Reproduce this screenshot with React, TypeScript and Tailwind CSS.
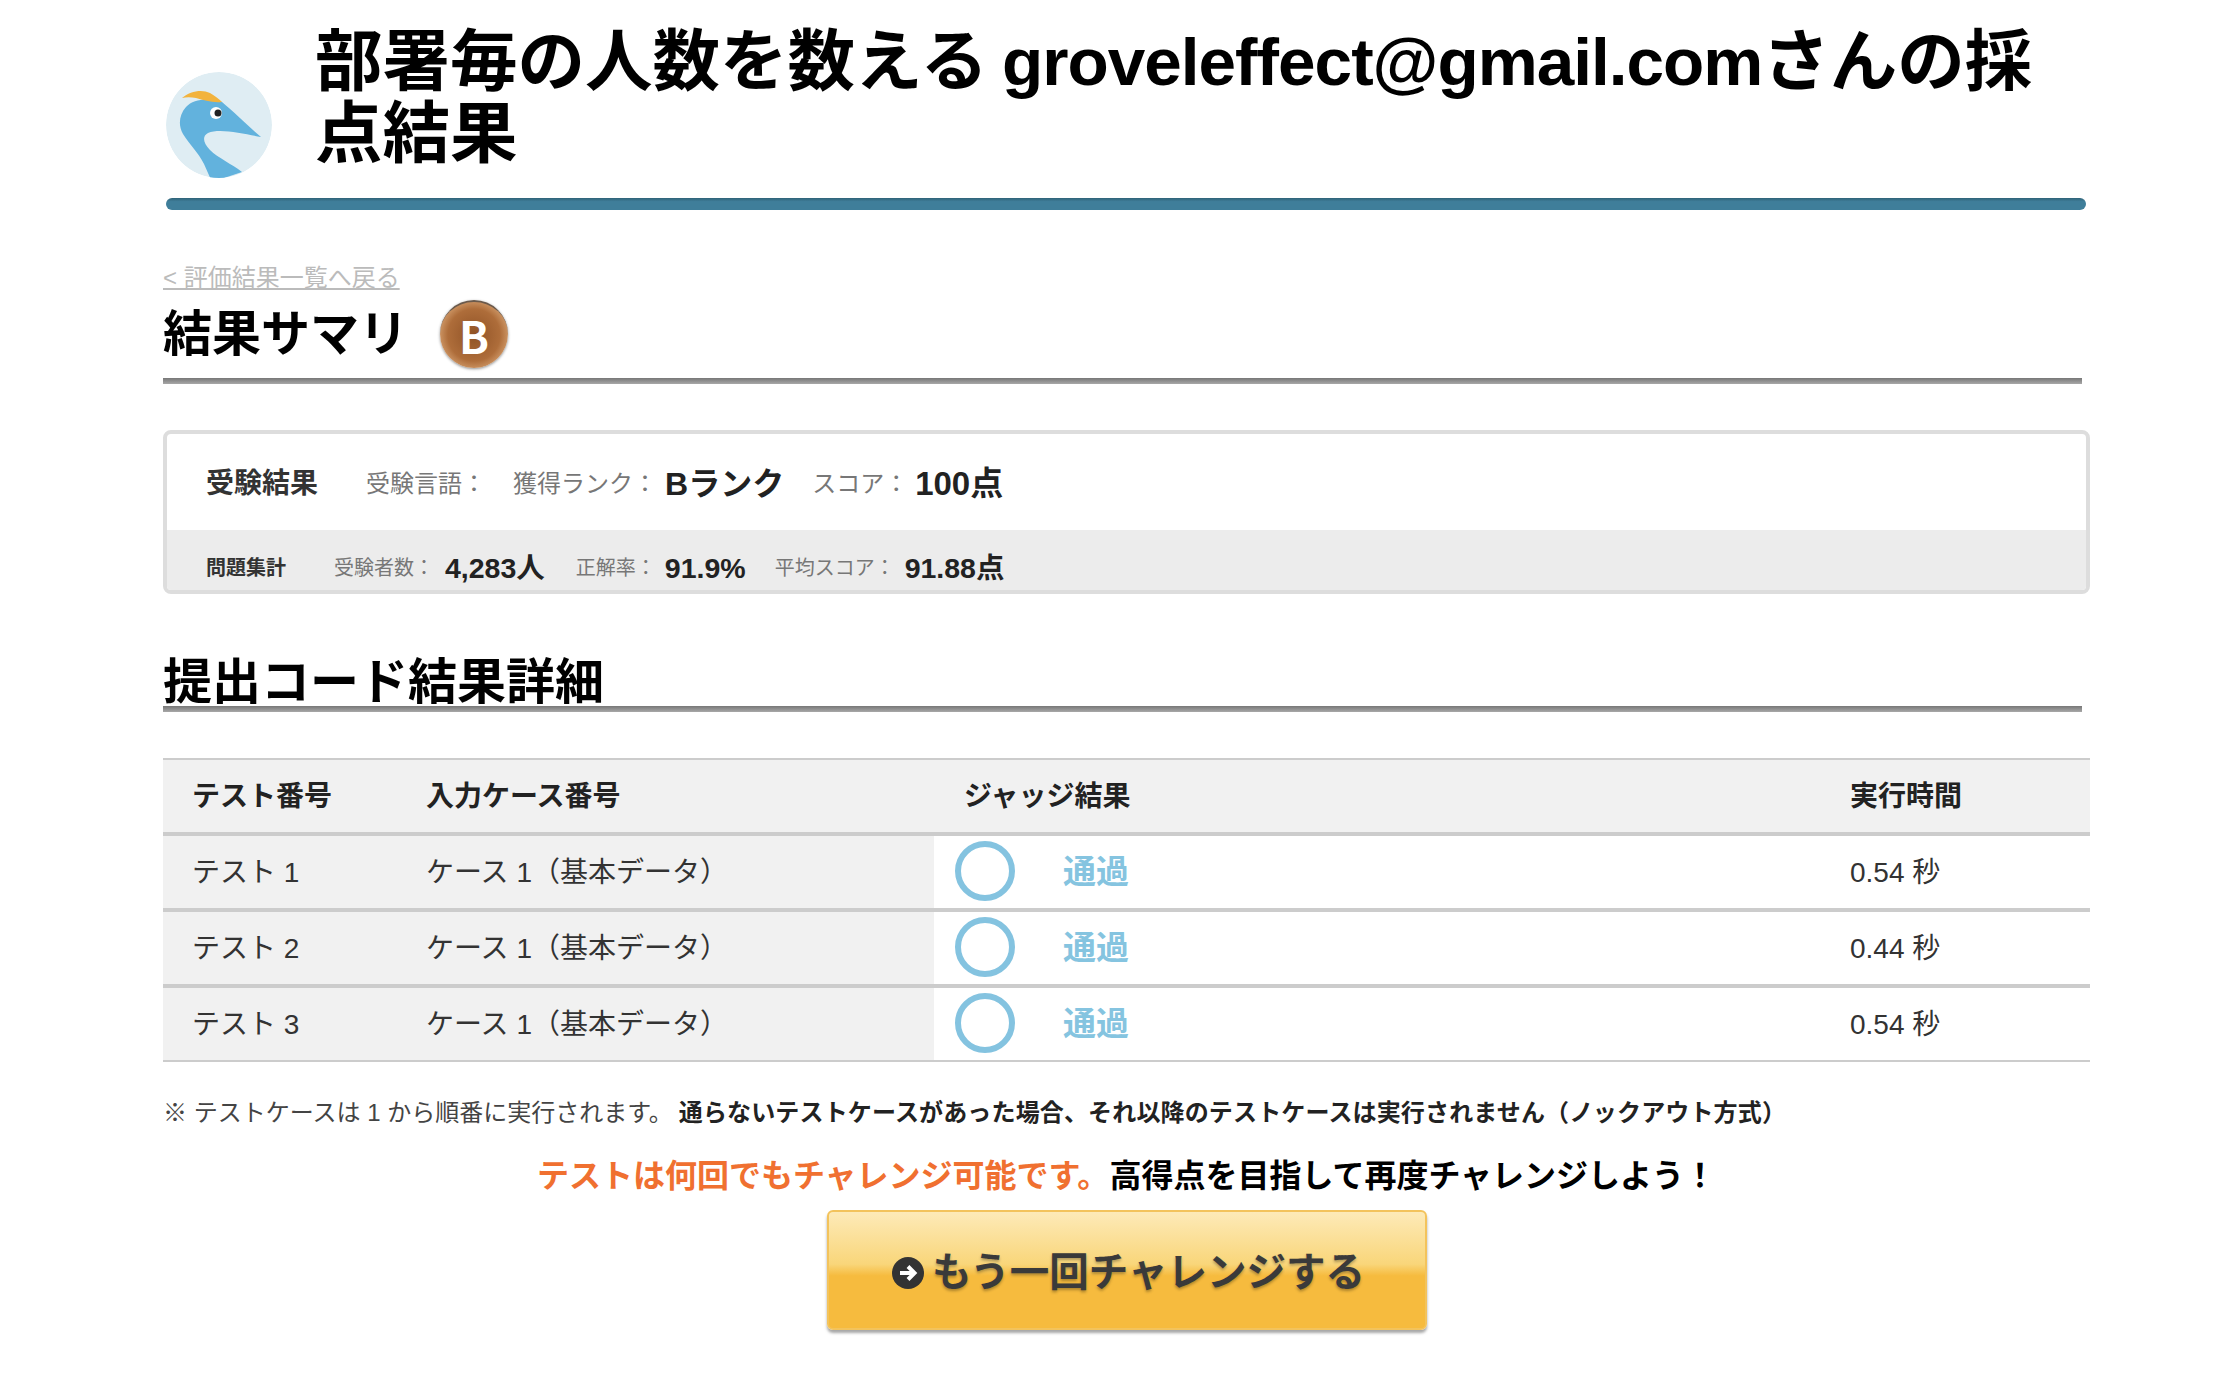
import React from "react";

const rows = [
  { test: "テスト 1", time: "0.54 秒" },
  { test: "テスト 2", time: "0.44 秒" },
  { test: "テスト 3", time: "0.54 秒" },
];

const Logo = () => (
  <svg width="106" height="106" viewBox="0 0 106 106" className="mb-[20px] shrink-0">
    <defs>
      <clipPath id="logo-clip">
        <circle cx="53" cy="53" r="53" />
      </clipPath>
    </defs>
    <g clipPath="url(#logo-clip)">
      <circle cx="53" cy="53" r="53" fill="#dfedf3" />
      <path
        d="M56 30 C44 26 28 26 20 35 C13 43 12 53 17 62 C24 73 32 80 38 92 L46 110 L76 100 C66 92 52 86 44 78 C37 71 36 64 42 61 C54 56 78 62 95 65 C82 54 68 40 56 30 Z"
        fill="#62b2dd"
      />
      <path d="M16 26 C24 19 36 17 44 21 C49 24 53 27 56 30 C46 31 38 28 30 26 C25 25 20 25 16 26 Z" fill="#f2b33d" />
      <circle cx="50" cy="41" r="6" fill="#ffffff" />
      <circle cx="52" cy="41" r="3.5" fill="#222222" />
    </g>
  </svg>
);

const Badge = () => (
  <div className="ml-[32px] flex h-[68px] w-[68px] items-center justify-center rounded-full border-t-2 border-[#6b5a4c] bg-[radial-gradient(circle_at_50%_50%,#8f5226_0%,#ae6d3a_55%,#dba878_82%,#a8672f_100%)] font-['Noto_Sans_CJK_JP',sans-serif] text-[44px] font-bold leading-none text-white shadow-[0_1px_3px_rgba(0,0,0,0.45)]">
    B
  </div>
);

const Label = ({ className, children }: { className: string; children: React.ReactNode }) => (
  <span className={`text-[#777777] ${className}`}>{children}</span>
);

const App = () => {
  return (
    <div className="min-h-[1388px] bg-white pt-[26px] font-['Liberation_Sans','Noto_Sans_CJK_JP',sans-serif] text-[#222222]">
      <div className="ml-[163px] w-[1927px]">
        <div className="ml-[3px] w-[1920px]">
          <div className="flex items-end">
            <Logo />
            <h1 className="ml-[43px] pb-[28px] text-[67.5px] font-bold leading-[72px] text-black">
              部署毎の人数を数える<span className="ml-[14px] tracking-[-1px]">groveleffect@gmail.com</span>さんの採点結果
            </h1>
          </div>
          <div className="h-[12px] rounded-[6px] bg-[linear-gradient(#2f6378,#3f7e9a_30%,#3f7e9a)]" />
        </div>

        <a className="mt-[53px] block text-[24px] leading-[30px] text-[#bbbbbb] underline">&lt; 評価結果一覧へ戻る</a>

        <div className="flex h-[85px] w-[1919px] items-center pb-[4px]">
          <h2 className="text-[49px] font-bold leading-[60px] text-black">結果サマリ</h2>
          <Badge />
        </div>
        <div className="h-[6px] w-[1919px] bg-[linear-gradient(#777777,#a8a8a8)]" />

        <div className="mt-[46px] h-[164px] overflow-hidden rounded-[8px] border-4 border-[#dddddd]">
          <div className="flex h-[96px] items-center pl-[39px] pt-[3px]">
            <span className="text-[28px] font-bold text-[#333333]">受験結果</span>
            <Label className="ml-[48px] text-[24px]">受験言語：</Label>
            <Label className="ml-[27px] text-[24px]">獲得ランク：</Label>
            <span className="ml-[8px] text-[32px] font-bold">Bランク</span>
            <Label className="ml-[28px] text-[24px]">スコア：</Label>
            <span className="ml-[7px] text-[33px] font-bold">100点</span>
          </div>
          <div className="flex h-[60px] items-center bg-[#ececec] pl-[39px] pt-[16px]">
            <span className="text-[20px] font-bold text-[#333333]">問題集計</span>
            <Label className="ml-[48px] text-[20px]">受験者数：</Label>
            <span className="ml-[11px] text-[28.5px] font-bold">4,283人</span>
            <Label className="ml-[31px] text-[20px]">正解率：</Label>
            <span className="ml-[9px] text-[28.5px] font-bold">91.9%</span>
            <Label className="ml-[29px] text-[20px]">平均スコア：</Label>
            <span className="ml-[10px] text-[28.5px] font-bold">91.88点</span>
          </div>
        </div>

        <h2 className="mt-[65px] pb-[1px] text-[49px] font-bold leading-[46px] text-black">提出コード結果詳細</h2>
        <div className="h-[6px] w-[1919px] bg-[linear-gradient(#777777,#a8a8a8)]" />

        <div className="mt-[46px] border-t-2 border-[#cccccc]">
          <div className="grid h-[76px] grid-cols-[234px_537px_886px_270px] items-center border-b-4 border-[#cccccc] bg-[#f1f1f1] pt-[2px] text-[28px] font-bold">
            <div className="pl-[29px]">テスト番号</div>
            <div className="pl-[29px]">入力ケース番号</div>
            <div className="pl-[30px]">ジャッジ結果</div>
            <div className="pl-[30px]">実行時間</div>
          </div>
          {rows.map((row, i) => (
            <div
              key={row.test}
              className={`grid grid-cols-[234px_537px_886px_270px] text-[28px] text-[#333333] ${
                i === 2 ? "h-[74px] border-b-2" : "h-[76px] border-b-4"
              } border-[#cccccc]`}
            >
              <div className="flex items-center bg-[#f1f1f1] pl-[29px] pt-[2px]">{row.test}</div>
              <div className="flex items-center bg-[#f1f1f1] pl-[29px] pt-[2px]">ケース 1（基本データ）</div>
              <div className="flex items-center pl-[21px]">
                <div className="mb-[2px] h-[60px] w-[60px] rounded-full border-[6px] border-[#84c3e0]" />
                <span className="ml-[48px] text-[33px] font-bold text-[#85c4e0]">通過</span>
              </div>
              <div className="flex items-center pl-[30px] pt-[2px]">{row.time}</div>
            </div>
          ))}
        </div>

        <p className="mt-[35px] text-[24px] leading-[32px] text-[#444444]">
          ※ テストケースは 1 から順番に実行されます。
          <strong className="ml-[6px] font-bold tracking-[0.15px] text-[#222222]">
            通らないテストケースがあった場合、それ以降のテストケースは実行されません（ノックアウト方式）
          </strong>
        </p>

        <p className="mt-[27px] text-center text-[32px] font-bold leading-[40px] text-black">
          <span className="text-[#f07030]">テストは何回でもチャレンジ可能です。</span>高得点を目指して再度チャレンジしよう！
        </p>

        <div className="mt-[14px] flex justify-center">
          <button className="flex h-[120px] w-[600px] items-center justify-center rounded-[6px] border-2 border-[#f3c35c] bg-[linear-gradient(#fdeab8,#f9d67a_45%,#f6bb3e_55%,#f6bb3e)] pl-[4px] pt-[6px] shadow-[0_3px_3px_rgba(0,0,0,0.35)]">
            <svg width="32" height="32" viewBox="0 0 32 32" className="mr-[8px] shrink-0">
              <circle cx="16" cy="16" r="16" fill="#333333" />
              <path d="M8 16 H22 M16 9.5 L22.5 16 L16 22.5" fill="none" stroke="#ffffff" strokeWidth="4" />
            </svg>
            <span className="text-[39.5px] font-bold leading-none text-[#3a3a3a] [text-shadow:0_2px_3px_rgba(0,0,0,0.3)]">
              もう一回チャレンジする
            </span>
          </button>
        </div>
      </div>
    </div>
  );
};

export default App;
